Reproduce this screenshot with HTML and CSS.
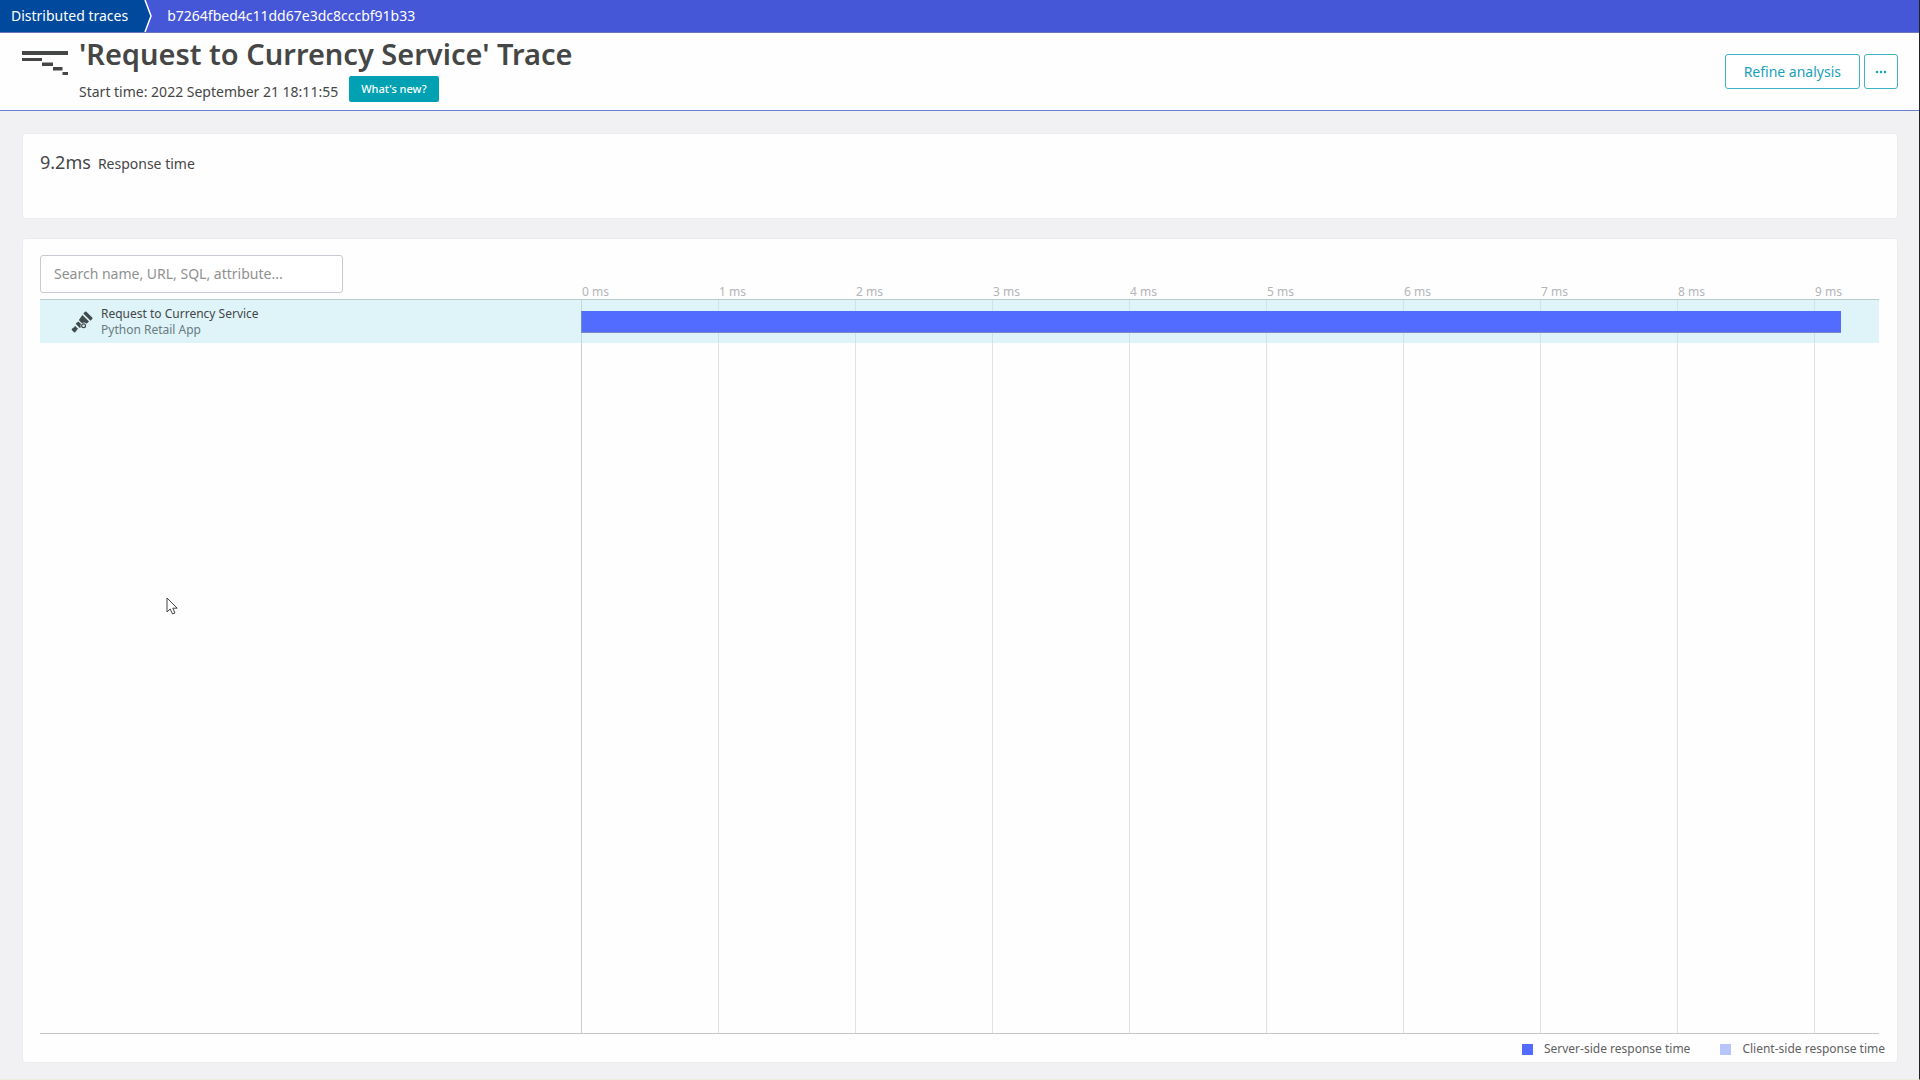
FILE: index.html
```html
<!DOCTYPE html>
<html lang="en">
<head>
<meta charset="utf-8">
<meta name="viewport" content="width=device-width, initial-scale=1">
<title>Request to Currency Service - Trace</title>
<link rel="stylesheet" href="styles.css">
</head>
<body>
<nav class="crumbs" aria-label="Breadcrumb">
  <a class="crumb crumb-root" href="#">Distributed traces</a>
  <svg class="crumb-arrow" width="9" height="32" viewBox="0 0 9 32" aria-hidden="true">
    <path d="M0 0H1L7 16L1 32H0Z" fill="#00499c"/>
    <path d="M1 0L7 16L1 32" fill="none" stroke="#fff" stroke-width="1.5"/>
  </svg>
  <a class="crumb crumb-current" href="#" aria-current="page">b7264fbed4c11dd67e3dc8cccbf91b33</a>
</nav>

<header class="header">
  <svg class="trace-icon" width="46" height="26" viewBox="0 0 46 26" aria-hidden="true" fill="#454646">
    <path d="M0 1h46v4H0zM0 8h20v3H0zM20 12.500h11v3.500H20zM31 17h9.500v3.500h-9.500zM40.500 22h5.500v3h-5.500z"/>
  </svg>
  <div class="heading">
    <h1 class="title">'Request to Currency Service' Trace</h1>
    <div class="subtitle">
      <span>Start time: 2022 September 21 18:11:55</span>
      <button class="whats-new" type="button">What's new?</button>
    </div>
  </div>
  <div class="actions">
    <button class="button" type="button">Refine analysis</button>
    <button class="button button-more" type="button" aria-label="More actions">
      <svg width="12" height="4" viewBox="0 0 12 4" fill="currentColor" aria-hidden="true"><circle cx="2" cy="2" r="1.3"/><circle cx="6" cy="2" r="1.3"/><circle cx="10" cy="2" r="1.3"/></svg>
    </button>
  </div>
</header>

<main class="content">
  <section class="card summary">
    <span class="summary-value">9.2ms</span>
    <span class="summary-label">Response time</span>
  </section>

  <section class="card trace">
    <div class="split toolbar">
      <div><input class="search" type="search" aria-label="Search" placeholder="Search name, URL, SQL, attribute..."></div>
      <div class="ticks scale">
        <span>0 ms</span><span>1 ms</span><span>2 ms</span><span>3 ms</span><span>4 ms</span><span>5 ms</span><span>6 ms</span><span>7 ms</span><span>8 ms</span><span>9 ms</span>
      </div>
    </div>

    <div class="chart">
      <div class="split grid-layer">
        <div></div>
        <div class="ticks lines">
          <i></i><i></i><i></i><i></i><i></i><i></i><i></i><i></i><i></i><i></i>
        </div>
      </div>
      <div class="split span-row">
        <div class="span-name">
          <svg class="span-icon" width="22" height="22" viewBox="0 0 22 22" aria-hidden="true">
            <g fill="#414a4c">
              <path d="M14 .8q.7-.7 1.400 0l5.800 5.800q.7.700 0 1.400l-1.700 1.700-7.200-7.200z"/>
              <path d="M11.400 4l6.600 6.600-2.400 2.200q-2-2.300-4.800-.6l-2.600-2.600q-.6-.6 0-1.200z"/>
              <path d="M7.400 10.400l2.600 2.600q-1 1.600-.2 3.200l-1 .8-3.700-3.700q-.5-.6 0-1.100z"/>
              <path d="M4 14.800l3.200 3.200-1.700.9q.3.600-.1 1l-1.400 1.400q-.5.400-1 0l-2.200-2.200q-.4-.5 0-1l1.400-1.400q.4-.4.900-.1z"/>
            </g>
            <circle cx="12.600" cy="14.800" r="1.900" fill="none" stroke="#414a4c" stroke-width="1.200"/>
          </svg>
          <a class="span-link" href="#">
            <span class="span-title">Request to Currency Service</span>
            <span class="span-app">Python Retail App</span>
          </a>
        </div>
        <div class="span-track"><div class="span-bar" style="width:97.1%"></div></div>
      </div>
    </div>

    <footer class="legend">
      <span class="legend-item"><i class="swatch swatch-server"></i>Server-side response time</span>
      <span class="legend-item"><i class="swatch swatch-client"></i>Client-side response time</span>
    </footer>
  </section>
</main>

<svg class="cursor" width="13" height="20" viewBox="0 0 13 20" aria-hidden="true">
  <path d="M1 1V15L4.200 12L6.500 17L9 16L6.800 11.200H11.200Z" fill="#fff" stroke="#444" stroke-width="1"/>
</svg>
</body>
</html>
```
FILE: styles.css
```css
* {
  box-sizing: border-box;
}

body {
  position: relative;
  display: flex;
  flex-direction: column;
  min-height: 100vh;
  margin: 0;
  border-right: 1px solid #222;
  border-bottom: 1px solid #ecedda;
  background: #f1f1f4;
  color: #454646;
  font: 14px/20px "Noto Sans", "Open Sans", sans-serif;
}

button,
input {
  font: inherit;
}

a {
  color: inherit;
  text-decoration: none;
}

.crumbs {
  display: flex;
  height: 33px;
  border-bottom: 1px solid #6d76b8;
  background: #4556d7;
  color: #fff;
}

.crumb {
  line-height: 31px;
}

.crumb-root {
  padding: 0 16px 0 11px;
  background: #00499c;
}

.crumb-current {
  padding-left: 14px;
}

.header {
  display: flex;
  align-items: flex-start;
  padding: 3px 21px 7px 22px;
  border-bottom: 1px solid #6d7fd0;
  background: #fefefe;
}

.trace-icon {
  margin: 14px 11px 0 0;
}

.heading {
  flex: 1;
}

.title {
  margin: 0;
  font-size: 29px;
  font-weight: 600;
  line-height: 36px;
}

.subtitle {
  display: flex;
  align-items: flex-end;
  gap: 11px;
  padding-top: 4px;
}

.subtitle span {
  line-height: 22px;
}

.whats-new {
  height: 26px;
  margin-bottom: 1px;
  padding: 0 12px;
  border: 0;
  border-radius: 2px;
  background: #00a1b2;
  color: #fff;
  font-size: 11px;
  font-weight: 500;
}

.actions {
  display: flex;
  gap: 4px;
  padding-top: 18px;
}

.button {
  height: 35px;
  padding: 0 18px;
  border: 1px solid #3fb3c6;
  border-radius: 3px;
  background: #fff;
  color: #1aa1b8;
}

.button-more {
  display: flex;
  align-items: center;
  padding: 0 10px;
}

.content {
  display: flex;
  flex: 1;
  flex-direction: column;
  gap: 19px;
  padding: 22px 21px 16px 22px;
}

.card {
  border: 1px solid #ececef;
  border-radius: 4px;
  background: #fefefe;
}

.summary {
  display: flex;
  align-items: baseline;
  gap: 7px;
  min-height: 86px;
  padding: 16px 17px;
}

.summary-value {
  font-size: 18px;
  line-height: 24px;
}

.trace {
  display: flex;
  flex: 1;
  flex-direction: column;
  padding: 16px 18px 0 17px;
}

.split {
  display: grid;
  grid-template-columns: 541fr 1298fr;
}

.toolbar {
  align-items: end;
  padding-bottom: 6px;
}

.search {
  display: block;
  width: 303px;
  height: 38px;
  padding: 0 13px 2px;
  border: 1px solid #c8cad2;
  border-radius: 3px;
  outline: 0;
  background: #fff;
  color: #454646;
  appearance: none;
}

.search::placeholder {
  color: #8f9090;
  opacity: 1;
}

.ticks {
  display: grid;
  grid-template-columns: repeat(9, 137fr) 65fr;
}

.scale {
  margin-bottom: -6px;
  color: #b4b5b8;
  font-size: 12px;
  line-height: 14px;
}

.scale span {
  padding-left: 1px;
}

.chart {
  display: grid;
  flex: 1;
  border-top: 1px solid #b9cccc;
  border-bottom: 1px solid #c5c6c9;
}

.grid-layer,
.span-row {
  grid-area: 1 / 1;
}

.lines i {
  border-left: 1px solid #e0e1e7;
}

.lines i:first-child {
  border-color: #cbccd2;
}

.span-row {
  z-index: 1;
  align-self: start;
  align-items: center;
  height: 43px;
  background: rgba(178, 232, 242, .42);
}

.span-name {
  display: flex;
  align-items: center;
  gap: 8px;
  padding: 1px 0 0 31px;
}

.span-link {
  display: flex;
  flex-direction: column;
  font-size: 12px;
  line-height: 16px;
}

.span-app {
  color: #697a80;
}

.span-bar {
  height: 22px;
  border: solid #7c86c0;
  border-width: 0 0 1px 1px;
  background: #526cff;
}

.legend {
  display: flex;
  justify-content: flex-end;
  gap: 30px;
  padding: 7px 0 5px;
  margin-right: -6px;
  color: #606162;
  font-size: 12px;
  line-height: 16px;
}

.legend-item {
  display: flex;
  align-items: center;
  gap: 11px;
}

.swatch {
  width: 11px;
  height: 11px;
}

.swatch-server {
  background: #526cff;
}

.swatch-client {
  background: #b8c5fa;
}

.cursor {
  position: absolute;
  top: 597px;
  left: 166px;
}
```
